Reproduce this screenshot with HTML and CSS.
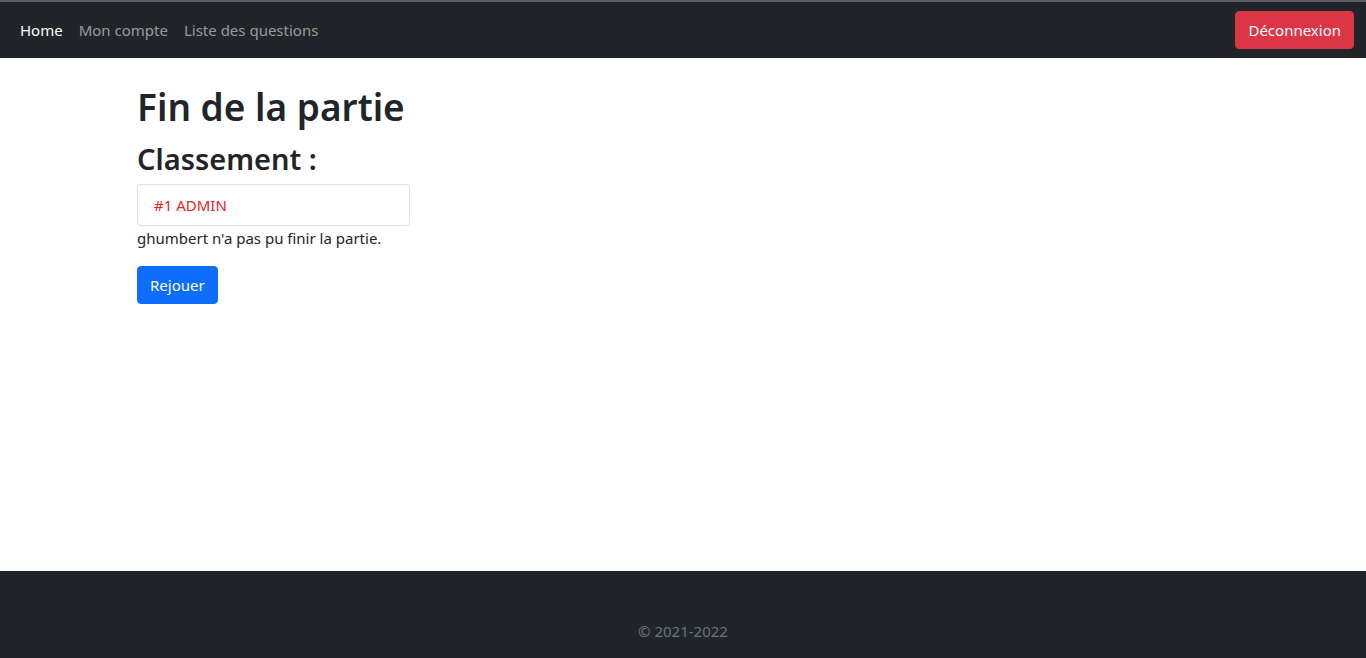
FILE: index.html
```html
<!DOCTYPE html>
<html lang="fr">
<head>
<meta charset="utf-8">
<title>Fin de la partie</title>
<link rel="stylesheet" href="styles.css">
</head>
<body>
<div class="page">
  <nav class="navbar">
    <ul class="nav-links">
      <li><a class="nav-link active" href="#">Home</a></li>
      <li><a class="nav-link" href="#">Mon compte</a></li>
      <li><a class="nav-link" href="#">Liste des questions</a></li>
    </ul>
    <a class="btn btn-danger" href="#">Déconnexion</a>
  </nav>
  <main class="main">
    <h1 class="title">Fin de la partie</h1>
    <h2 class="subtitle">Classement :</h2>
    <ul class="list-group">
      <li class="list-item">#1 ADMIN</li>
    </ul>
    <p class="note">ghumbert n'a pas pu finir la partie.</p>
    <a class="btn btn-primary" href="#">Rejouer</a>
  </main>
  <footer class="footer">
    <span class="copy">© 2021-2022</span>
  </footer>
</div>
</body>
</html>
```

FILE: styles.css
```css
* { box-sizing: border-box; }
html, body { margin: 0; padding: 0; height: 100%; }
body {
  font-family: "Noto Sans", "Segoe UI", Roboto, sans-serif;
  font-size: 15px;
  line-height: 24px;
  color: #212529;
  background: #fff;
}
.page {
  min-height: 658px;
  display: flex;
  flex-direction: column;
}
.navbar {
  background: #212529;
  border-top: 2px solid #5c5e61;
  height: 58px;
  padding: 0 12px;
  display: flex;
  align-items: center;
  justify-content: space-between;
}
.nav-links {
  list-style: none;
  margin: 0;
  padding: 0;
  display: flex;
}
.nav-link {
  display: block;
  padding: 8px 8px;
  color: rgba(255,255,255,0.55);
  text-decoration: none;
}
.nav-link.active { color: #fff; }
.btn {
  display: inline-block;
  padding: 6px 12px;
  font-size: 15px;
  line-height: 24px;
  border-radius: 4px;
  color: #fff;
  text-decoration: none;
  border: 1px solid transparent;
}
.btn-danger { background: #dc3545; border-color: #dc3545; }
.btn-primary { background: #0d6efd; border-color: #0d6efd; }
.main {
  flex: 1;
  padding: 23px 137px 0;
}
.title {
  margin: 0 0 7px;
  font-size: 37px;
  font-weight: 600;
  line-height: 51px;
}
.subtitle {
  margin: 0 0 5px;
  font-size: 29px;
  font-weight: 600;
  line-height: 40px;
}
.list-group {
  list-style: none;
  margin: 0;
  padding: 0;
  width: 273px;
}
.list-item {
  border: 1px solid rgba(0,0,0,0.125);
  border-radius: 4px;
  padding: 8px 16px;
  color: #e3262c;
}
.note { margin: 0 0 16px; }
.footer {
  background: #212529;
  height: 87px;
  display: flex;
  align-items: flex-end;
  justify-content: center;
  padding-bottom: 15px;
}
.copy { color: #6c757d; }
```
